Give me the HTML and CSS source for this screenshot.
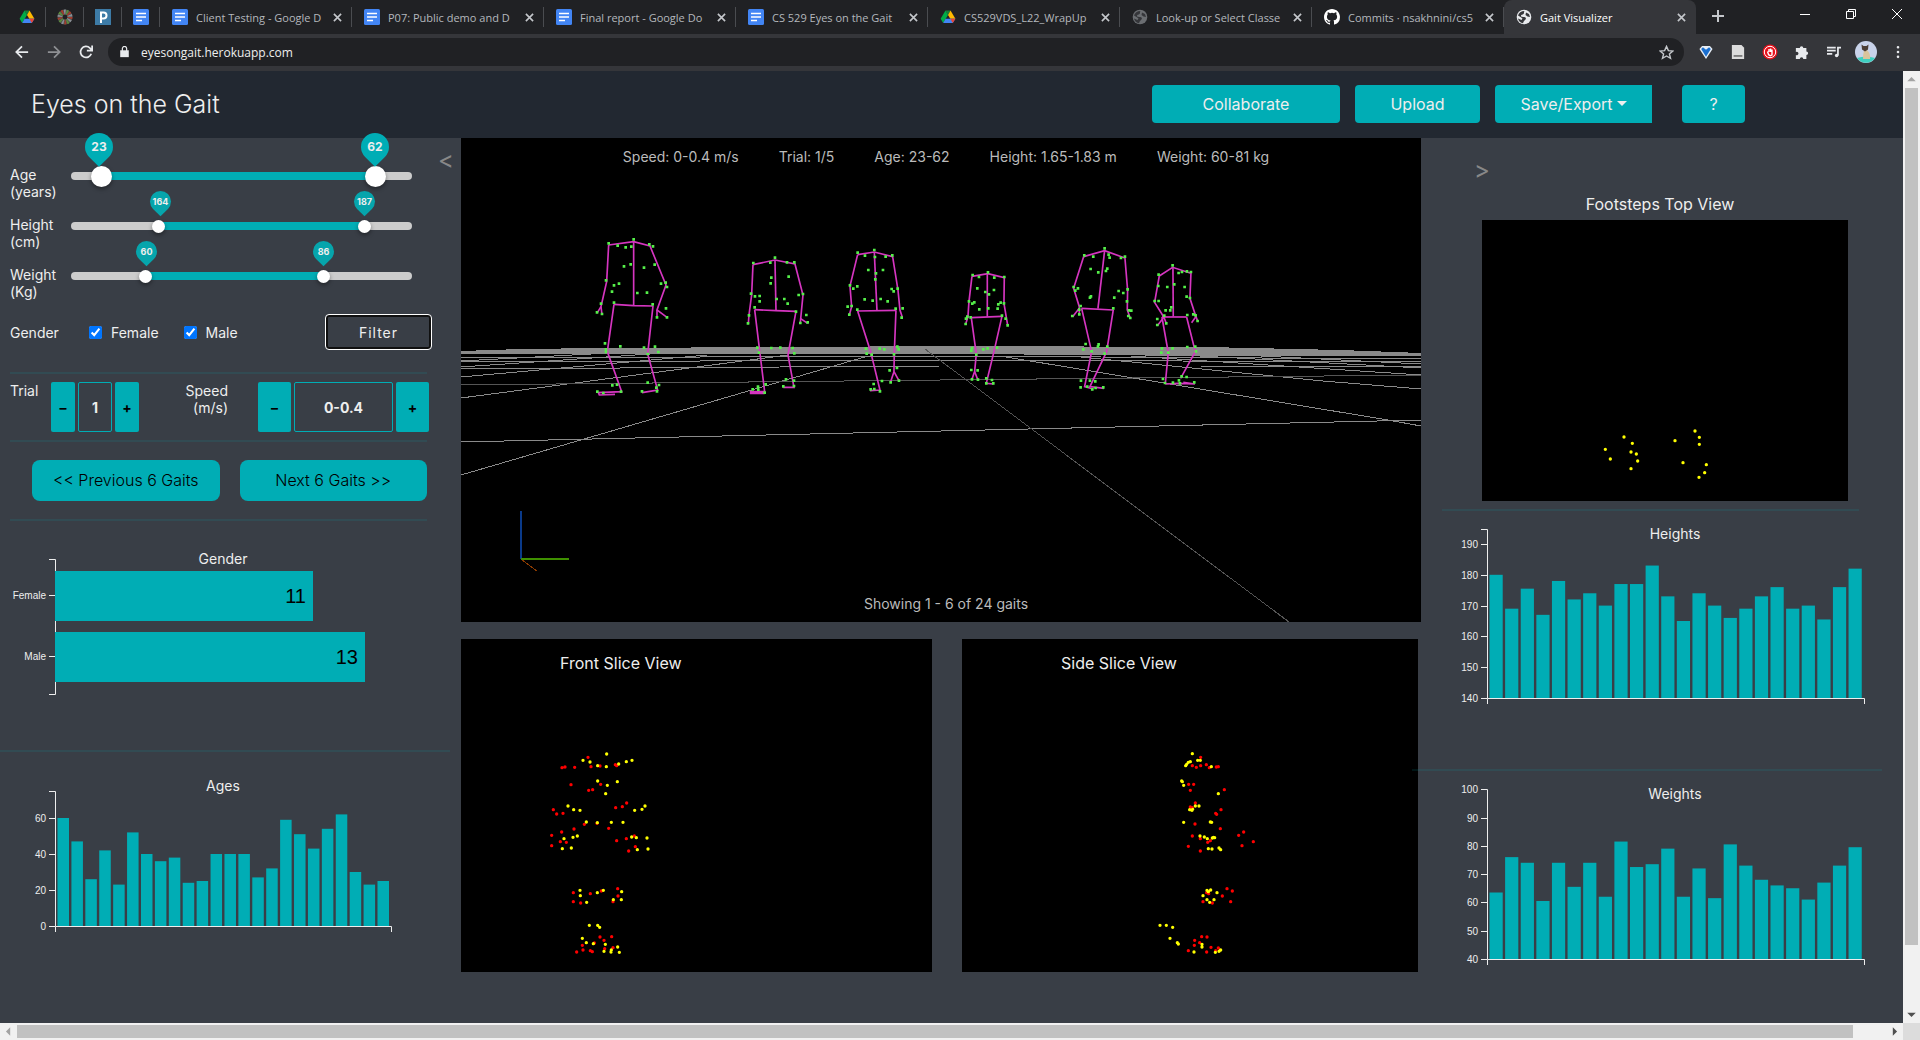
FILE: index.html
```html
<!DOCTYPE html>
<html lang="en">

<head>
    <meta charset="UTF-8">
    <meta name="viewport" content="width=device-width, initial-scale=1.0">
    <title>Gait Visualizer</title>
    <link rel="stylesheet" href="styles.css">
</head>

<body>
    <!-- shared icons -->
    <svg class="sprites" aria-hidden="true">
        <symbol id="icon-docs" viewBox="0 0 16 16">
            <rect width="16" height="16" rx="1.5" fill="#4285f4" />
            <path d="M3 4.5h10M3 8h10M3 11.5h6" stroke="#fff" stroke-width="1.6" />
        </symbol>
        <symbol id="icon-drive" viewBox="0 0 16 16">
            <path d="M5.5 1.5h5L8 6z" fill="#188038" />
            <path d="M5.5 1.5 8 6 3.2 14 .6 9.8z" fill="#00ac47" />
            <path d="M10.5 1.5 15.4 9.8H10.3L8 6z" fill="#ffba00" />
            <path d="M5.6 9.8h9.8L12.8 14H3.2z" fill="#4285f4" />
            <path d="M15.4 9.8 12.8 14 10.3 9.8z" fill="#ea4335" />
        </symbol>
        <symbol id="icon-globe" viewBox="0 0 16 16">
            <circle cx="8" cy="8" r="7.3" fill="currentColor" />
            <path d="M8.5 2C7.500 3 8.500 4 7.500 5S4.800 5.500 5 7s3.500.5 4.500 1.500 0 2-1 3S7.500 13 7 14.200C4.500 14 2.500 12 2 9.500L5.500 11l1-1.500-2-1.500L2 6.500C2.800 4 5 2 8.500 2zM10 3.500l3 1.500 1 3-2.500-.5L9.500 6z"
                fill="#35363a" />
        </symbol>
        <symbol id="icon-close" viewBox="0 0 10 10">
            <path d="M1 1l8 8M9 1L1 9" stroke="currentColor" stroke-width="1.8" />
        </symbol>
    </svg>

    <div class="tab-strip">
        <a class="pinned" href="#" aria-label="Drive"><svg><use href="#icon-drive" /></svg></a>
        <a class="pinned" href="#" aria-label="Wheel">
            <svg viewBox="0 0 16 16" fill="none" stroke-width="5">
                <circle cx="8" cy="8" r="5" stroke="#4a4d50" />
                <circle cx="8" cy="8" r="5" stroke="#a33c2c" stroke-dasharray="1.6 5" />
                <circle cx="8" cy="8" r="5" stroke="#5c8a3c" stroke-dasharray="1.6 5" stroke-dashoffset="2.2" />
                <circle cx="8" cy="8" r="5" stroke="#8a8f94" stroke-dasharray="1.6 5" stroke-dashoffset="4.4" />
            </svg>
        </a>
        <a class="pinned" href="#" aria-label="Pandora">
            <svg viewBox="0 0 16 16">
                <rect width="16" height="16" fill="#3d7ba6" />
                <path d="M6 14V3.500h2.500a3 3 0 0 1 0 6H6" fill="none" stroke="#fff" stroke-width="2" />
            </svg>
        </a>
        <a class="pinned" href="#" aria-label="Docs"><svg><use href="#icon-docs" /></svg></a>
        <div class="tab">
            <svg><use href="#icon-docs" /></svg><span class="tab-title">Client Testing - Google D</span>
            <button class="tab-close" aria-label="Close tab"><svg><use href="#icon-close" /></svg></button>
        </div>
        <div class="tab">
            <svg><use href="#icon-docs" /></svg><span class="tab-title">P07: Public demo and D</span>
            <button class="tab-close" aria-label="Close tab"><svg><use href="#icon-close" /></svg></button>
        </div>
        <div class="tab">
            <svg><use href="#icon-docs" /></svg><span class="tab-title">Final report - Google Do</span>
            <button class="tab-close" aria-label="Close tab"><svg><use href="#icon-close" /></svg></button>
        </div>
        <div class="tab">
            <svg><use href="#icon-docs" /></svg><span class="tab-title">CS 529 Eyes on the Gait</span>
            <button class="tab-close" aria-label="Close tab"><svg><use href="#icon-close" /></svg></button>
        </div>
        <div class="tab">
            <svg><use href="#icon-drive" /></svg><span class="tab-title">CS529VDS_L22_WrapUp</span>
            <button class="tab-close" aria-label="Close tab"><svg><use href="#icon-close" /></svg></button>
        </div>
        <div class="tab">
            <svg class="dim"><use href="#icon-globe" /></svg><span class="tab-title">Look-up or Select Classe</span>
            <button class="tab-close" aria-label="Close tab"><svg><use href="#icon-close" /></svg></button>
        </div>
        <div class="tab">
            <svg viewBox="0 0 16 16"><path fill="#fff" d="M8 0C3.58 0 0 3.58 0 8c0 3.54 2.29 6.53 5.47 7.59.4.07.55-.17.55-.38 0-.19-.01-.82-.01-1.49-2.01.37-2.53-.49-2.69-.94-.09-.23-.48-.94-.82-1.13-.28-.15-.68-.52-.01-.53.63-.01 1.08.58 1.23.82.72 1.21 1.87.87 2.33.66.07-.52.28-.87.51-1.07-1.78-.2-3.64-.89-3.64-3.95 0-.87.31-1.59.82-2.15-.08-.2-.36-1.02.08-2.12 0 0 .67-.21 2.2.82a7.6 7.6 0 0 1 4 0c1.53-1.04 2.2-.82 2.2-.82.44 1.1.16 1.92.08 2.12.51.56.82 1.27.82 2.15 0 3.07-1.87 3.75-3.65 3.95.29.25.54.73.54 1.48 0 1.07-.01 1.93-.01 2.2 0 .21.15.46.55.38A8 8 0 0 0 16 8c0-4.42-3.58-8-8-8z" /></svg>
            <span class="tab-title">Commits · nsakhnini/cs5</span>
            <button class="tab-close" aria-label="Close tab"><svg><use href="#icon-close" /></svg></button>
        </div>
        <div class="tab active">
            <svg><use href="#icon-globe" /></svg><span class="tab-title">Gait Visualizer</span>
            <button class="tab-close" aria-label="Close tab"><svg><use href="#icon-close" /></svg></button>
        </div>
        <button class="new-tab" aria-label="New tab"><svg viewBox="0 0 12 12"><path d="M6 0v12M0 6h12" /></svg></button>
        <div class="window-controls">
            <button aria-label="Minimize"><svg viewBox="0 0 10 10"><path d="M0 5.5h10" /></svg></button>
            <button aria-label="Restore"><svg viewBox="0 0 10 10"><path d="M.5 2.5h7v7h-7zM2.5 2.5v-2h7v7h-2" /></svg></button>
            <button aria-label="Close"><svg viewBox="0 0 10 10"><path d="M0 0l10 10M10 0L0 10" /></svg></button>
        </div>
    </div>

    <div class="toolbar">
        <button class="tool" aria-label="Back"><svg viewBox="0 0 16 16"><path d="M15 8H2M8 1.5L1.5 8 8 14.5" /></svg></button>
        <button class="tool faded" aria-label="Forward"><svg viewBox="0 0 16 16"><path d="M1 8h13M8 1.5L14.5 8 8 14.5" /></svg></button>
        <button class="tool" aria-label="Reload"><svg viewBox="0 0 16 16"><path d="M14 10A6.3 6.3 0 1 1 12.500 3.500L14.500 5.500M15 .5v6H9" /></svg></button>
        <div class="address">
            <svg viewBox="0 0 10 14"><path d="M0 5h10v8H0z" fill="#e8eaed" /><path d="M2.5 6V3a2.5 2.5 0 0 1 5 0v3" fill="none" stroke="#e8eaed" stroke-width="1.4" /></svg>
            <input type="text" value="eyesongait.herokuapp.com" aria-label="Address">
            <svg class="star" viewBox="0 0 16 16"><path d="M8 1.5l2 4.5 4.8.4-3.700 3.100 1.200 4.700L8 11.700l-4.300 2.500 1.200-4.700L1.200 6.400 6 6z" /></svg>
        </div>
        <button class="tool" aria-label="VPN extension"><svg viewBox="0 0 16 16" stroke="none"><path d="M8 16L.5 4.500 3.500 1h9l3 3.500z" fill="#e8eef5" stroke="none" /><path d="M8 13.500L2.500 4.500l2-2 3.500 3 3.500-3 2 2z" fill="#1a6fd0" stroke="none" /></svg></button>
        <button class="tool" aria-label="Notes extension"><svg viewBox="0 0 16 16"><path d="M1 0h11l3 3v13H1z" fill="#dcdcdc" stroke="none" /><path d="M3 12.500h10" stroke="#777" /></svg></button>
        <button class="tool" aria-label="Ad blocker"><svg class="blocker" viewBox="0 0 16 16"><circle cx="8" cy="8" r="7.500" fill="#e8121c" stroke="none" /><circle cx="8" cy="8" r="5.700" stroke="#fff" stroke-width="1" /><path d="M5.500 7.500l1 3q1.500 2 3.500.5V5.500M7 8V5M8.600 8V4.500" stroke="#fff" stroke-width="1.400" /></svg></button>
        <button class="tool" aria-label="Extensions"><svg viewBox="0 0 16 16"><path d="M1 3.500h4.500a2 2 0 1 1 4 0H13v4a2 2 0 1 1 0 4V16H9.500a2 2 0 1 0-4 0H1v-4.500a2 2 0 1 0 0-3.500z" fill="#e8eaed" stroke="none" /></svg></button>
        <button class="tool" aria-label="Media controls"><svg viewBox="0 0 16 16"><path d="M0 3h10M0 6.500h10M0 10h6M12.500 12V3H16" /><circle cx="11" cy="12" r="2" fill="#e8eaed" stroke="none" /></svg></button>
        <button class="tool" aria-label="Profile">
            <svg class="avatar" viewBox="0 0 22 22">
                <circle cx="11" cy="11" r="11" fill="#c9d3ea" />
                <path d="M2 17q9-3 18 0a11 11 0 0 1-18 0z" fill="#3fd0c0" />
                <path d="M8 18q0-4 1-9h3q4 4 3 9z" fill="#d9c49c" />
                <path d="M6.500 3.500l2 1.500h3l2-1.500-.5 5-3 2-3-2z" fill="#4a3d35" />
            </svg>
        </button>
        <button class="tool" aria-label="Menu"><svg viewBox="0 0 16 16" class="dots-menu"><path d="M8 2.5h.01M8 8h.01M8 13.5h.01" /></svg></button>
    </div>

    <div class="viewport">
        <div class="page">
            <header class="header">
                <h1>Eyes on the Gait</h1>
                <button class="btn collaborate">Collaborate</button>
                <button class="btn upload">Upload</button>
                <button class="btn save">Save/Export<span class="caret"></span></button>
                <button class="btn help">?</button>
            </header>

            <main class="content">
                <section class="left">
                    <button class="collapse collapse-left" aria-label="Hide filters">&lt;</button>

                    <div class="filter-row">
                        <label for="ageMin">Age<br>(years)</label>
                        <div class="range large">
                            <div class="fill" style="left: 9%; right: 11%"></div>
                            <input type="range" id="ageMin" min="20.2" max="65.65" step="any" value="23">
                            <input type="range" min="20.2" max="65.65" step="any" value="62" aria-label="Maximum age">
                            <output class="pin" style="left: 8%"><span>23</span></output>
                            <output class="pin" style="left: 89%"><span>62</span></output>
                        </div>
                    </div>
                    <div class="filter-row">
                        <label for="heightMin">Height<br>(cm)</label>
                        <div class="range">
                            <div class="fill" style="left: 26%; right: 14%"></div>
                            <input type="range" id="heightMin" min="155" max="191.6" step="any" value="164">
                            <input type="range" min="155" max="191.6" step="any" value="187" aria-label="Maximum height">
                            <output class="pin" style="left: 26%"><span>164</span></output>
                            <output class="pin" style="left: 86%"><span>187</span></output>
                        </div>
                    </div>
                    <div class="filter-row">
                        <label for="weightMin">Weight<br>(Kg)</label>
                        <div class="range">
                            <div class="fill" style="left: 22%; right: 26%"></div>
                            <input type="range" id="weightMin" min="50" max="98" step="any" value="60">
                            <input type="range" min="50" max="98" step="any" value="86" aria-label="Maximum weight">
                            <output class="pin" style="left: 22%"><span>60</span></output>
                            <output class="pin" style="left: 74%"><span>86</span></output>
                        </div>
                    </div>

                    <div class="gender-row">
                        <span class="gender-label">Gender</span>
                        <label><input type="checkbox" checked>Female</label>
                        <label><input type="checkbox" checked>Male</label>
                        <button class="filter-btn">Filter</button>
                    </div>
                    <hr>
                    <div class="stepper-row">
                        <label class="trial-label" for="trial">Trial</label>
                        <div class="stepper">
                            <button aria-label="Previous trial">–</button>
                            <input type="text" id="trial" value="1">
                            <button aria-label="Next trial">+</button>
                        </div>
                        <label class="speed-label" for="speed">Speed<br>(m/s)</label>
                        <div class="stepper wide">
                            <button aria-label="Slower">–</button>
                            <input type="text" id="speed" value="0-0.4">
                            <button aria-label="Faster">+</button>
                        </div>
                    </div>
                    <hr>
                    <div class="pager">
                        <button>&lt;&lt; Previous 6 Gaits</button>
                        <button>Next 6 Gaits &gt;&gt;</button>
                    </div>
                    <hr>
                    <svg class="chart" id="genderChart" width="440" height="229"></svg>
                    <hr class="full">
                    <svg class="chart" id="agesChart" width="440" height="190"></svg>
                </section>

                <section class="center">
                    <div class="scene">
                        <div class="scene-info">
                            <span>Speed: 0-0.4 m/s</span>
                            <span>Trial: 1/5</span>
                            <span>Age: 23-62</span>
                            <span>Height: 1.65-1.83 m</span>
                            <span>Weight: 60-81 kg</span>
                        </div>
                        <svg class="scene-view" viewBox="0 38 960 446">
                            <!-- floor grid -->
                            <g fill="none" stroke="#8a8a8a" shape-rendering="crispEdges">
                                <path d="M0 213L60 211 140 210 500 208 745 209 880 212 960 215V218H745L500 216H0z" fill="#8a8a8a" stroke="none" />
                                <path d="M0 337L407 218M0 260L327 217M0 239L246 217M0 229L189 216M0 223L130 216" />
                                <path d="M0 304L960 282M0 231L480 228 740 228 960 229M0 224L480 222 960 224M0 220L480 218 960 221" />
                                <path d="M539 218L927 282 960 288M610 218L862 243 960 251M670 218L960 237M720 217L960 230M780 217L960 226" />
                                <path d="M0 247L960 237M464 211L828 484" stroke="#555" />
                            </g>
                            <!-- axes -->
                            <g fill="none" shape-rendering="crispEdges">
                                <path d="M60 373V421" stroke="#0a3a8a" stroke-width="2" />
                                <path d="M60 421L76 433" stroke="#8a3a00" />
                                <path d="M60 421H108" stroke="#3f9000" stroke-width="2" />
                            </g>
                            <g id="skeletons" transform="translate(99 -8) scale(.3333)"></g>
                        </svg>
                        <p class="showing">Showing 1 - 6 of 24 gaits</p>
                    </div>
                    <div class="slices">
                        <div class="slice front">
                            <h2>Front Slice View</h2>
                            <svg id="frontSlice" viewBox="3 171 1413 855"></svg>
                        </div>
                        <div class="slice side">
                            <h2>Side Slice View</h2>
                            <svg id="sideSlice" viewBox="36 171 1368 855"></svg>
                        </div>
                    </div>
                </section>

                <section class="right">
                    <button class="collapse" aria-label="Hide charts">&gt;</button>
                    <h2>Footsteps Top View</h2>
                    <svg id="footsteps" class="footsteps" viewBox="186 270 1098 843"></svg>
                    <hr>
                    <svg class="chart" id="heightsChart" width="460" height="258"></svg>
                    <hr class="full">
                    <svg class="chart" id="weightsChart" width="460" height="210"></svg>
                </section>
            </main>
        </div>
        <div class="scroll-y"><i class="arrow up"></i><div class="thumb"></div><i class="arrow down"></i></div>
        <div class="scroll-x"><i class="arrow back"></i><div class="thumb"></div><i class="arrow next"></i></div>
        <div class="scroll-corner"></div>
    </div>

    <script src="script.js"></script>
</body>

</html>
```

FILE: styles.css
```css
* {
    margin: 0;
    padding: 0;
    box-sizing: border-box;
}

body {
    height: 100vh;
    display: flex;
    flex-direction: column;
    overflow: hidden;
    background-color: #393e46;
    color: #eeeeee;
    font-family: 'Century Gothic', Inter, sans-serif;
    font-size: 14px;
    line-height: 17px;
}

button,
input {
    font: inherit;
    color: inherit;
}

button {
    border: none;
    background: none;
    cursor: pointer;
}

.sprites {
    display: none;
}

/* browser tabs */
.tab-strip {
    flex: none;
    display: flex;
    height: 34px;
    padding-left: 8px;
    background-color: #202124;
    font-family: 'Segoe UI', 'Open Sans', sans-serif;
    font-size: 11px;
}

.tab-strip > a svg,
.tab > svg {
    flex: none;
    width: 16px;
    height: 16px;
    color: #e8eaed;
}

.tab > svg.dim {
    color: #6b6e72;
}

.pinned,
.tab {
    display: flex;
    align-items: center;
    background: linear-gradient(#4a4c50, #4a4c50) right center / 1px 20px no-repeat;
}

.pinned {
    width: 38px;
    justify-content: center;
}

.tab {
    flex: 0 1 192px;
    min-width: 0;
    padding: 0 7px 0 12px;
    gap: 8px;
    color: #b4b8bd;
}

.tab-title {
    flex: 1;
    margin-right: -8px;
    white-space: nowrap;
    overflow: hidden;
}

.tab-close {
    width: 16px;
    height: 16px;
    color: #c4c7cb;
}

.tab-close svg {
    display: block;
    width: 9px;
    height: 9px;
    margin: auto;
}

.tab.active {
    background: #35363a;
    border-radius: 8px 8px 0 0;
    color: #ffffff;
}

.new-tab {
    width: 44px;
}

.new-tab svg {
    width: 12px;
    height: 12px;
    stroke: #c4c7cb;
    stroke-width: 2;
}

.window-controls {
    display: flex;
    margin-left: auto;
    height: 28px;
}

.window-controls button {
    width: 46px;
}

.window-controls svg {
    width: 10px;
    height: 10px;
    fill: none;
    stroke: #ffffff;
}

/* browser toolbar */
.toolbar {
    flex: none;
    display: flex;
    align-items: center;
    height: 37px;
    padding: 0 6px 1px;
    background-color: #35363a;
    font-family: 'Segoe UI', 'Open Sans', sans-serif;
    font-size: 12px;
}

.tool {
    display: flex;
    justify-content: center;
    align-items: center;
    width: 32px;
    height: 28px;
}

.tool svg {
    width: 14px;
    height: 14px;
    fill: none;
    stroke: #e8eaed;
    stroke-width: 2;
}

.tool.faded {
    opacity: 0.5;
}

.tool svg.blocker {
    width: 16px;
    height: 16px;
}

.tool svg.avatar {
    width: 22px;
    height: 22px;
    stroke: none;
}

.tool svg.dots-menu {
    stroke-width: 3;
    stroke-linecap: round;
}

.address {
    flex: 1;
    display: flex;
    align-items: center;
    gap: 12px;
    height: 28px;
    margin: 0 6px;
    padding: 0 10px 0 12px;
    border-radius: 14px;
    background-color: #202124;
}

.address svg {
    width: 9px;
    height: 12px;
}

.address input {
    flex: 1;
    border: none;
    outline: none;
    background: none;
}

.address svg.star {
    width: 15px;
    height: 15px;
    fill: none;
    stroke: #c4c7cb;
    stroke-width: 1.5;
}

/* page area with its scrollbars */
.viewport {
    flex: 1;
    min-height: 0;
    display: grid;
    grid-template: 1fr 17px / 1fr 17px;
}

.page {
    overflow: hidden;
}

.scroll-y,
.scroll-x {
    display: flex;
    align-items: center;
    justify-content: space-between;
    background-color: #f1f1f1;
}

.scroll-y {
    grid-area: 1 / 2;
    flex-direction: column;
}

.scroll-x {
    grid-area: 2 / 1;
}

.scroll-corner {
    background-color: #dcdcdc;
}

.scroll-y .thumb {
    width: 13px;
    height: 90%;
    margin-bottom: auto;
    background-color: #c1c1c1;
}

.scroll-x .thumb {
    width: 96.5%;
    height: 13px;
    margin-right: auto;
    background-color: #c1c1c1;
}

.arrow {
    width: 17px;
    height: 17px;
    background-color: #505050;
}

.arrow.up {
    background-color: #a3a3a3;
    clip-path: polygon(50% 35%, 75% 60%, 25% 60%);
}

.arrow.down {
    clip-path: polygon(25% 40%, 75% 40%, 50% 65%);
}

.arrow.back {
    background-color: #a3a3a3;
    clip-path: polygon(35% 50%, 60% 25%, 60% 75%);
}

.arrow.next {
    clip-path: polygon(40% 25%, 40% 75%, 65% 50%);
}

/* header */
.header {
    display: flex;
    align-items: center;
    height: 67px;
    padding: 0 158px 1px 31px;
    background-color: #222831;
}

.header h1 {
    margin-right: auto;
    font-size: 25px;
    line-height: 30px;
    font-weight: 300;
}

.btn {
    height: 38px;
    margin-left: 15px;
    border-radius: 4px;
    background-color: #00adb5;
    font-size: 16px;
}

.collaborate {
    width: 188px;
}

.upload {
    width: 125px;
}

.save {
    width: 157px;
    border-radius: 4px 0 0 4px;
}

.help {
    width: 63px;
    margin-left: 30px;
}

.caret {
    display: inline-block;
    margin-left: 4px;
    vertical-align: 4px;
    border-top: 5px solid;
    border-right: 5px solid transparent;
    border-left: 5px solid transparent;
}

/* columns */
.content {
    display: grid;
    grid-template-columns: 461px 1fr 482px;
}

hr {
    height: 2px;
    border: none;
    background-color: rgba(0, 173, 181, 0.12);
}

h2 {
    font-size: 16px;
    line-height: 20px;
    font-weight: 400;
}

.chart {
    display: block;
}

.chart text {
    fill: #eeeeee;
}

.chart .title {
    font-size: 14px;
    text-anchor: middle;
}

.chart .tick {
    font: 10px 'Liberation Sans', Arial, sans-serif;
    text-anchor: end;
}

.chart .value {
    font: 20px 'Liberation Sans', Arial, sans-serif;
    text-anchor: end;
    fill: #000000;
}

.chart rect {
    fill: #00adb5;
}

.chart path {
    fill: none;
    stroke: #eeeeee;
}

/* left column */
.left {
    position: relative;
    padding: 28px 0 0 10px;
}

.left hr {
    width: 417px;
}

.left .chart {
    margin-left: -10px;
}

.left hr.full {
    width: 450px;
    margin-left: -10px;
}

.collapse {
    color: #888888;
    font-size: 24px;
    line-height: 24px;
}

.collapse-left {
    position: absolute;
    top: 10px;
    right: 7px;
}

.filter-row {
    display: flex;
    height: 34px;
    margin-bottom: 16px;
}

.filter-row label {
    width: 61px;
}

.range {
    position: relative;
    width: 341px;
    height: 20px;
}

.range::before,
.fill {
    content: '';
    position: absolute;
    top: 6px;
    height: 8px;
    background-color: #cccccc;
}

.range::before {
    left: 0;
    right: 0;
    border-radius: 4px;
}

.fill {
    background-color: #00adb5;
}

.range input {
    position: absolute;
    left: 0;
    top: 0;
    width: 100%;
    height: 21px;
    appearance: none;
    background: none;
    pointer-events: none;
}

.range input::-webkit-slider-thumb {
    appearance: none;
    width: 13px;
    height: 13px;
    border-radius: 50%;
    background-color: #ffffff;
    box-shadow: 0 2px 4px rgba(0, 0, 0, 0.4);
    pointer-events: auto;
}

.range.large input::-webkit-slider-thumb {
    width: 21px;
    height: 21px;
}

.pin {
    position: absolute;
    bottom: 24px;
    width: 21px;
    height: 21px;
    margin-left: -10px;
    border-radius: 50% 50% 0 50%;
    background-color: #06a5ac;
    transform: rotate(45deg);
    font-size: 9px;
    font-weight: 700;
}

.pin span {
    display: block;
    line-height: 21px;
    text-align: center;
    transform: rotate(-45deg);
}

.range.large .pin {
    bottom: 25px;
    width: 28px;
    height: 28px;
    margin-left: -13px;
    background-color: #00adb5;
    font-size: 12px;
}

.range.large .pin span {
    line-height: 28px;
}

.gender-row {
    display: flex;
    align-items: center;
    width: 422px;
    height: 36px;
    margin: -2px 0 22px;
}

.gender-label {
    width: 79px;
}

.gender-row label {
    display: flex;
    align-items: center;
    gap: 9px;
    margin-right: 25px;
}

.gender-row input {
    width: 13px;
    height: 13px;
    accent-color: #0075ff;
}

.filter-btn {
    width: 107px;
    height: 36px;
    margin-left: auto;
    border: 1px solid #ffffff;
    border-radius: 4px;
    box-shadow: inset 0 0 0 2px #101010;
    letter-spacing: 1px;
}

.stepper-row {
    display: flex;
    width: 419px;
    margin: 8px 0;
}

.trial-label {
    width: 41px;
}

.speed-label {
    flex: 1;
    padding-right: 30px;
    text-align: right;
}

.stepper {
    display: flex;
    gap: 3px;
    height: 50px;
    font-weight: 700;
}

.stepper button {
    width: 24px;
    border-radius: 2px;
    background-color: #00adb5;
    color: #000000;
}

.stepper input {
    width: 34px;
    border: 1px solid #00adb5;
    border-radius: 2px;
    background: none;
    text-align: center;
}

.stepper.wide button {
    width: 33px;
}

.stepper.wide input {
    width: 99px;
}

.pager {
    display: flex;
    gap: 20px;
    width: 417px;
    padding-left: 22px;
    margin: 18px 0;
}

.pager button {
    flex: 1;
    height: 41px;
    border-radius: 8px;
    background-color: #00adb5;
    color: #000000;
    font-size: 16px;
    font-weight: 300;
}

/* centre column */
.scene {
    position: relative;
    background-color: #000000;
    color: #bbbbbb;
}

.scene-info {
    display: flex;
    justify-content: center;
    gap: 40px;
    height: 38px;
    padding-left: 10px;
    line-height: 38px;
}

.scene-view {
    display: block;
    width: 100%;
}

.showing {
    position: absolute;
    left: 0;
    right: 0;
    bottom: 10px;
    padding-left: 10px;
    text-align: center;
}

.slices {
    display: flex;
    gap: 30px;
    margin-top: 17px;
    padding-right: 3px;
}

.slice {
    background-color: #000000;
}

.slice.front {
    flex: 471;
}

.slice.side {
    flex: 456;
}

.slice h2 {
    height: 48px;
    padding: 14px 0 0 99px;
}

.slice svg {
    display: block;
    width: 100%;
}

/* right column */
.right {
    padding: 20px 0 0 61px;
}

.right .collapse {
    display: block;
    margin-left: -8px;
}

.right h2 {
    width: 356px;
    margin: 12px 0 6px;
    text-align: center;
}

.footsteps {
    display: block;
    width: 366px;
    height: 281px;
    background-color: #000000;
}

.right hr {
    width: 417px;
    margin: 8px 0 0 -40px;
}

.right hr.full {
    position: relative;
    width: 470px;
    margin: 0 0 0 -70px;
}

.right .chart {
    margin-left: -61px;
}
```

FILE: script.js
```javascript
const SVG_NS = 'http://www.w3.org/2000/svg';

function add(parent, tag, attrs, text) {
    const el = document.createElementNS(SVG_NS, tag);
    for (const key in attrs) {
        el.setAttribute(key, attrs[key]);
    }
    if (text !== undefined) {
        el.textContent = text;
    }
    parent.appendChild(el);
    return el;
}

// Vertical bar chart, one bar per person
function drawBars(id, values, o) {
    const svg = document.getElementById(id);
    const y = v => o.bottom - (v - o.min) * o.scale;
    const step = (o.right - o.left) / (values.length + 0.15);

    values.forEach((v, i) => {
        add(svg, 'rect', { x: o.left + 2.5 + i * step, y: y(v), width: step - 2.4, height: o.bottom - y(v) });
    });
    add(svg, 'path', { d: `M${o.left - 6} ${o.top}.5H${o.left}.5V${o.bottom}.5` });
    add(svg, 'path', { d: `M${o.left}.5 ${o.bottom + 6}V${o.bottom}.5H${o.right}.5V${o.bottom + 6}` });
    o.ticks.forEach(t => {
        const ty = Math.round(y(t)) + 0.5;
        add(svg, 'path', { d: `M${o.left - 6} ${ty}H${o.left}` });
        add(svg, 'text', { class: 'tick', x: o.left - 9, y: ty + 3 }, t);
    });
    add(svg, 'text', { class: 'title', x: o.titleX, y: o.titleY }, o.title);
}

function drawGender() {
    const svg = document.getElementById('genderChart');
    add(svg, 'path', { d: 'M49 38.5H55.5V173.5H49' });
    [['Female', 11, 50, 258], ['Male', 13, 111, 310]].forEach(([name, count, y, width]) => {
        add(svg, 'rect', { x: 55, y: y, width: width, height: 50 });
        add(svg, 'path', { d: `M49 ${y + 24}.5H55` });
        add(svg, 'text', { class: 'tick', x: 46, y: y + 28 }, name);
        add(svg, 'text', { class: 'value', x: 48 + width, y: y + 32 }, count);
    });
    add(svg, 'text', { class: 'title', x: 223, y: 43 }, 'Gender');
}

// Points come as "x,y x,y ..." and are drawn as square or round dots
function drawDots(parent, points, color, size, cap) {
    const d = points.split(' ').map(p => `M${p.replace(',', ' ')}h.01`).join('');
    add(parent, 'path', { d: d, stroke: color, 'stroke-width': size, 'stroke-linecap': cap });
}

drawGender();

drawBars('agesChart', [60, 47, 26, 42, 23, 52, 40, 36, 38, 24, 25, 40, 40, 40, 27, 32, 59, 51, 43, 54, 62, 30, 23, 25],
    { title: 'Ages', titleX: 223, titleY: 39, left: 55, right: 391, top: 39, bottom: 174, min: 0, scale: 1.8, ticks: [0, 20, 40, 60] });

drawBars('heightsChart', [180, 169, 175.5, 167, 178, 172, 174, 170, 177, 177, 183, 173, 165, 174, 170, 166, 169, 173, 176, 169, 170, 165.5, 176, 182],
    { title: 'Heights', titleX: 254, titleY: 28, left: 66, right: 443, top: 18, bottom: 187, min: 140, scale: 3.08, ticks: [140, 150, 160, 170, 180, 190] });

drawBars('weightsChart', [63.5, 76, 74, 60.5, 74, 65.5, 74, 62, 81.5, 72.5, 73.5, 79, 62, 72, 61.5, 80.5, 73, 68, 66, 65, 61, 67, 73, 79.5],
    { title: 'Weights', titleX: 254, titleY: 28, left: 66, right: 443, top: 18, bottom: 188, min: 40, scale: 2.83, ticks: [40, 50, 60, 70, 80, 90, 100] });

// Walking figures: bones first, then the tracked markers
const bones = [
    '146,345 221,335 270,348 318,465 291,540 321,562', '291,540 291,560', '146,345 140,455 123,530 126,555', '123,530 112,548', '221,335 221,527', '162,523 221,527 279,528', '162,523 142,665 185,785 115,788 118,795 165,793', '279,528 263,672 293,780 246,788',
    '579,404 645,390 705,402 729,495 721,578', '721,565 743,580', '579,404 575,495 567,555 565,582', '645,390 648,541', '584,539 648,542 708,544', '584,539 600,670 614,785 572,785 572,790 614,790', '708,544 684,675 702,772 670,772',
    '893,374 943,366 998,380 1014,480 1020,540 1027,562', '893,374 870,468 875,530 868,555', '943,366 951,542', '893,543 1008,541', '893,543 932,665 960,780 930,782', '1008,541 1003,670 1002,725 992,755', '1002,725 1017,752',
    '1236,439 1284,431 1333,443 1332,520 1343,585', '1236,439 1227,515 1224,560 1217,583', '1282,431 1282,560', '1234,563 1326,559', '1234,563 1249,672 1244,725 1236,748', '1244,725 1254,750', '1326,559 1302,665 1279,760 1300,762',
    '1571,380 1634,362 1695,384 1703,480 1702,540 1711,565', '1571,380 1541,475 1558,530 1558,552', '1558,535 1538,560', '1634,362 1614,536', '1565,535 1660,540', '1565,535 1595,665 1574,770 1600,777', '1660,540 1640,665 1590,770 1632,775',
    '1798,438 1838,412 1893,430 1890,505 1908,560 1895,578', '1908,560 1913,573', '1798,438 1784,517 1812,562 1792,587', '1812,562 1819,580', '1839,412 1840,560', '1806,561 1880,561', '1806,561 1825,668 1816,762', '1880,561 1906,665 1862,745', '1816,762 1855,760 1905,762 1870,757'
];
const markers = '146,340 173,347 197,352 214,350 221,328 268,343 279,349 192,409 212,403 252,413 284,404 138,451 162,466 177,461 156,485 232,489 261,488 303,461 317,458 321,471 162,518 278,523 123,521 111,547 126,552 318,535 291,562 321,562 135,640 181,649 138,658 138,666 252,653 285,650 295,666 263,672 112,785 130,789 157,766 171,764 183,785 246,784 263,758 289,773 297,765 291,784 ' +
    '580,399 631,398 645,383 681,397 703,397 634,443 686,440 632,460 573,491 585,499 599,498 599,514 650,507 673,507 683,521 716,495 729,492 584,532 567,556 564,580 721,579 739,555 743,577 708,545 592,653 634,654 661,653 698,654 597,668 703,670 617,763 594,770 578,778 595,779 614,788 678,748 670,769 702,752 702,768 ' +
    '893,368 915,377 943,360 945,381 977,380 997,376 925,420 969,420 948,430 946,448 870,466 892,469 880,476 995,477 1013,476 1001,484 914,508 962,507 938,512 983,514 863,530 875,528 892,539 868,554 1007,536 1028,535 1025,563 918,656 959,656 973,658 1012,650 1016,658 920,671 935,674 1002,673 989,721 1011,714 966,753 941,762 932,778 943,777 960,784 992,757 1017,752 ' +
    '1238,435 1257,441 1284,427 1303,443 1333,441 1252,475 1302,480 1276,486 1287,493 1227,514 1243,517 1237,521 1322,518 1315,523 1332,520 1258,538 1285,535 1313,536 1222,560 1232,562 1326,557 1218,566 1217,582 1337,566 1343,586 1236,654 1270,658 1283,655 1311,653 1234,662 1249,674 1234,720 1253,721 1279,745 1296,750 1236,748 1254,749 1279,760 1300,760 ' +
    '1573,376 1600,380 1634,355 1646,374 1649,383 1683,384 1695,380 1592,417 1642,416 1638,423 1615,427 1541,471 1554,475 1546,482 1703,478 1676,483 1690,489 1593,499 1590,503 1663,503 1701,514 1562,528 1558,539 1537,558 1558,553 1660,535 1707,541 1714,542 1705,558 1711,564 1577,642 1616,643 1614,650 1642,650 1570,658 1595,664 1634,671 1563,752 1590,752 1606,754 1562,772 1582,770 1597,778 1607,774 1630,772 ' +
    '1796,434 1838,406 1856,429 1866,426 1881,424 1893,426 1795,468 1822,471 1843,463 1874,471 1784,513 1796,513 1880,500 1890,504 1834,532 1817,541 1831,541 1813,557 1792,567 1819,580 1792,585 1882,555 1900,553 1907,556 1913,573 1806,655 1838,655 1882,651 1906,650 1804,668 1825,668 1908,664 1809,747 1865,739 1880,741 1815,759 1839,758 1857,751 1860,760 1903,757';

const skeletons = document.getElementById('skeletons');
bones.forEach(points => {
    add(skeletons, 'polyline', { points: points, fill: 'none', stroke: '#d535c0', 'stroke-width': 5 });
});
drawDots(skeletons, markers, '#55f04a', 8, 'square');

const front = document.getElementById('frontSlice');
drawDots(front, '384,382 306,413 315,411 344,412 393,410 420,408 466,404 470,407 333,464 386,481 398,479 422,463 280,539 290,552 309,550 467,533 487,530 500,519 373,583 411,580 342,597 446,595 305,606 275,616 301,635 319,637 275,647 470,632 499,626 523,618 526,650 506,663 340,788 391,791 424,783 473,776 474,798 340,815 362,819 459,815 420,921 455,920 432,931 367,946 403,939 434,956 459,953 369,960 350,966 391,962 397,965', '#ff0000', 10, 'round');
drawDots(front, '440,372 369,391 390,396 413,407 439,410 476,402 499,395 516,391 413,453 472,455 442,466 437,491 324,528 341,539 360,541 524,541 546,538 555,528 379,576 412,578 454,577 489,577 312,626 339,622 352,618 307,656 334,654 515,621 529,623 561,624 532,659 564,657 360,781 361,797 412,788 430,781 485,785 380,817 460,809 484,809 388,886 413,886 419,892 367,925 379,938 400,941 436,943 473,951 432,964 454,960 453,966 478,967', '#ffff00', 10, 'round');

const side = document.getElementById('sideSlice');
drawDots(side, '752,382 727,407 739,412 752,407 769,404 778,413 799,411 805,410 716,463 731,463 721,481 823,479 736,519 721,531 727,533 813,539 797,550 800,553 735,582 811,596 881,606 866,616 910,635 876,647 727,618 751,626 781,632 773,637 715,649 751,663 831,776 847,783 817,798 842,815 770,788 776,791 759,815 787,819 755,920 771,921 734,931 749,938 733,946 783,952 805,954 715,962 770,966 797,962', '#ff0000', 10, 'round');
drawDots(side, '727,371 743,391 751,391 721,395 715,397 710,403 707,407 784,410 695,453 697,455 701,466 805,491 736,528 747,528 719,539 726,541 728,538 701,577 781,576 785,577 750,618 763,621 772,626 787,624 790,622 794,623 775,656 786,657 807,654 812,659 771,781 782,780 775,785 801,788 759,797 771,809 792,809 779,817 630,886 649,886 668,892 660,925 682,938 685,942 756,943 756,951 732,966 796,967 807,964 812,960', '#ffff00', 10, 'round');

drawDots(document.getElementById('footsteps'), '556,958 571,987 612,921 637,940 633,966 649,972 653,993 633,1016 765,932 825,903 838,922 838,943 789,998 859,1004 854,1028 837,1042', '#ffff00', 10, 'round');
```
